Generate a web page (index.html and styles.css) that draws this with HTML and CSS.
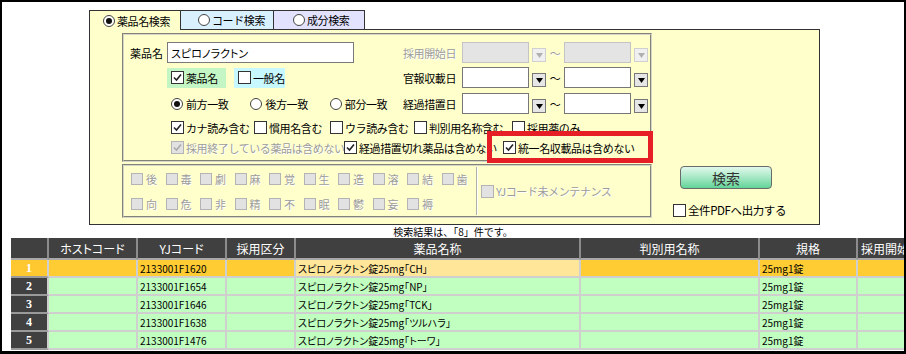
FILE: index.html
```html
<!DOCTYPE html>
<html lang="ja">
<head>
    <meta charset="UTF-8">
    <title>薬品検索</title>
    <link rel="stylesheet" href="styles.css">
</head>
<body>
    <div class="frame">
        <div class="panel">
            <div class="tabs">
                <div class="tab tab-drug"><span class="rd on"></span>薬品名検索</div>
                <div class="tab tab-code"><span class="rd"></span>コード検索</div>
                <div class="tab tab-comp"><span class="rd"></span>成分検索</div>
                <div class="tab-fill"></div>
            </div>
            <div class="panel-body">
                <div class="fields">
                    <div class="box box-main">
                        <div class="row">
                            <div class="lpart">
                                <span class="lbl-name">薬品名</span>
                                <input class="txt" type="text" value="スピロノラクトン">
                            </div>
                            <div class="dates dis">
                                <span class="dlabel">採用開始日</span>
                                <span class="date off"></span><span class="dd off"><svg width="7" height="5"><path d="M0 0h7L3.5 5z"/></svg></span>
                                <span class="tilde">～</span>
                                <span class="date off"></span><span class="dd off"><svg width="7" height="5"><path d="M0 0h7L3.5 5z"/></svg></span>
                            </div>
                        </div>
                        <div class="row row-b">
                            <div class="lpart">
                                <label class="chip chip-green"><span class="cb"><svg width="11" height="11"><path d="M2 5.5L4.5 8L9 2.5"/></svg></span>薬品名</label>
                                <label class="chip chip-cyan"><span class="cb"></span>一般名</label>
                            </div>
                            <div class="dates">
                                <span class="dlabel">官報収載日</span>
                                <span class="date"></span><span class="dd"><svg width="7" height="5"><path d="M0 0h7L3.5 5z"/></svg></span>
                                <span class="tilde">～</span>
                                <span class="date"></span><span class="dd"><svg width="7" height="5"><path d="M0 0h7L3.5 5z"/></svg></span>
                            </div>
                        </div>
                        <div class="row row-c">
                            <div class="lpart radios">
                                <label class="opt"><span class="rd on"></span>前方一致</label>
                                <label class="opt"><span class="rd"></span>後方一致</label>
                                <label class="opt"><span class="rd"></span>部分一致</label>
                            </div>
                            <div class="dates">
                                <span class="dlabel">経過措置日</span>
                                <span class="date"></span><span class="dd"><svg width="7" height="5"><path d="M0 0h7L3.5 5z"/></svg></span>
                                <span class="tilde">～</span>
                                <span class="date"></span><span class="dd"><svg width="7" height="5"><path d="M0 0h7L3.5 5z"/></svg></span>
                            </div>
                        </div>
                        <div class="checks row-d">
                            <label class="chk opt-kana"><span class="cb"><svg width="11" height="11"><path d="M2 5.5L4.5 8L9 2.5"/></svg></span>カナ読み含む</label>
                            <label class="chk opt-common"><span class="cb"></span>慣用名含む</label>
                            <label class="chk opt-ura"><span class="cb"></span>ウラ読み含む</label>
                            <label class="chk opt-ident"><span class="cb"></span>判別用名称含む</label>
                            <label class="chk"><span class="cb"></span>採用薬のみ</label>
                        </div>
                        <div class="checks row-e">
                            <label class="chk dis opt-ended"><span class="cb off"><svg width="11" height="11"><path d="M2 5.5L4.5 8L9 2.5"/></svg></span>採用終了している薬品は含めない</label>
                            <label class="chk opt-expired"><span class="cb"><svg width="11" height="11"><path d="M2 5.5L4.5 8L9 2.5"/></svg></span>経過措置切れ薬品は含めない</label>
                            <label class="chk"><span class="cb"><svg width="11" height="11"><path d="M2 5.5L4.5 8L9 2.5"/></svg></span>統一名収載品は含めない</label>
                        </div>
                    </div>
                    <div class="box box-flags">
                        <div class="flag-grid dis">
                            <label class="flag"><span class="cb off"></span>後</label>
                            <label class="flag"><span class="cb off"></span>毒</label>
                            <label class="flag"><span class="cb off"></span>劇</label>
                            <label class="flag"><span class="cb off"></span>麻</label>
                            <label class="flag"><span class="cb off"></span>覚</label>
                            <label class="flag"><span class="cb off"></span>生</label>
                            <label class="flag"><span class="cb off"></span>造</label>
                            <label class="flag"><span class="cb off"></span>溶</label>
                            <label class="flag"><span class="cb off"></span>結</label>
                            <label class="flag"><span class="cb off"></span>歯</label>
                            <label class="flag"><span class="cb off"></span>向</label>
                            <label class="flag"><span class="cb off"></span>危</label>
                            <label class="flag"><span class="cb off"></span>非</label>
                            <label class="flag"><span class="cb off"></span>精</label>
                            <label class="flag"><span class="cb off"></span>不</label>
                            <label class="flag"><span class="cb off"></span>眠</label>
                            <label class="flag"><span class="cb off"></span>鬱</label>
                            <label class="flag"><span class="cb off"></span>妄</label>
                            <label class="flag"><span class="cb off"></span>褥</label>
                        </div>
                        <div class="vsep"></div>
                        <label class="chk dis yj"><span class="cb off"></span>YJコード未メンテナンス</label>
                    </div>
                </div>
                <div class="actions">
                    <div class="search-btn">検索</div>
                    <label class="chk pdf"><span class="cb"></span>全件PDFへ出力する</label>
                </div>
            </div>
        </div>

        <div class="result-msg">検索結果は、「8」件です。</div>

        <div class="grid-wrap">
            <table class="grid">
                <thead>
                    <tr>
                        <th class="c0"></th>
                        <th class="c1">ホストコード</th>
                        <th class="c2">YJコード</th>
                        <th class="c3">採用区分</th>
                        <th class="c4">薬品名称</th>
                        <th class="c5">判別用名称</th>
                        <th class="c6">規格</th>
                        <th class="c7">採用開始日</th>
                    </tr>
                </thead>
                <tbody>
                    <tr class="sel">
                        <td class="num">1</td><td></td><td>2133001F1620</td><td></td>
                        <td class="focus">スピロノラクトン錠25mg「CH」</td><td></td><td>25mg1錠</td><td></td>
                    </tr>
                    <tr>
                        <td class="num">2</td><td></td><td>2133001F1654</td><td></td>
                        <td>スピロノラクトン錠25mg「NP」</td><td></td><td>25mg1錠</td><td></td>
                    </tr>
                    <tr>
                        <td class="num">3</td><td></td><td>2133001F1646</td><td></td>
                        <td>スピロノラクトン錠25mg「TCK」</td><td></td><td>25mg1錠</td><td></td>
                    </tr>
                    <tr>
                        <td class="num">4</td><td></td><td>2133001F1638</td><td></td>
                        <td>スピロノラクトン錠25mg「ツルハラ」</td><td></td><td>25mg1錠</td><td></td>
                    </tr>
                    <tr>
                        <td class="num">5</td><td></td><td>2133001F1476</td><td></td>
                        <td>スピロノラクトン錠25mg「トーワ」</td><td></td><td>25mg1錠</td><td></td>
                    </tr>
                </tbody>
            </table>
        </div>

        <div class="mark"></div>
    </div>
</body>
</html>
```

FILE: styles.css
```css
/* Drug search screen */
* {
    box-sizing: border-box;
}

body {
    margin: 0;
    font-family: "Noto Sans CJK JP", "Noto Sans", sans-serif;
    font-size: 11px;
    color: #000;
    background: #fff;
}

.frame {
    position: relative;
    width: 906px;
    height: 354px;
    border: 2px solid #000;
    border-bottom-width: 3px;
    display: flex;
    flex-direction: column;
    overflow: hidden;
}

/* search panel */
.panel {
    margin: 8px 0 0 87px;
    width: 731px;
    height: 215px;
    display: flex;
    flex-direction: column;
    flex: none;
}

.tabs {
    display: flex;
    height: 20px;
}

.tab {
    height: 20px;
    border-top: 1px solid #333;
    border-left: 1px solid #333;
    display: flex;
    align-items: center;
    gap: 2px;
    letter-spacing: -0.4px;
}

.tab-drug {
    width: 91px;
    padding-left: 13px;
    background: #ffffcc;
}

.tab-code {
    width: 93px;
    padding-left: 17px;
    background: #d9f1ff;
    border-bottom: 1px solid #333;
}

.tab-comp {
    width: 92px;
    padding-left: 19px;
    background: #e2e2ff;
    border-right: 1px solid #333;
    border-bottom: 1px solid #333;
}

.tab-fill {
    flex: 1;
    border-bottom: 1px solid #333;
}

.panel-body {
    flex: 1;
    display: flex;
    background: #ffffcc;
    border: 1px solid #333;
    border-top: none;
}

.fields {
    margin: 3px 0 0 32px;
    display: flex;
    flex-direction: column;
    gap: 2px;
}

.box {
    width: 530px;
    border: 2px groove #d6d6c6;
}

.box-main {
    height: 129px;
    padding-top: 7px;
}

.row {
    display: flex;
    align-items: center;
    height: 21px;
}

.row-b {
    margin-top: 4px;
}

.row-c {
    margin-top: 5px;
}

.lpart {
    width: 279px;
    display: flex;
    align-items: center;
}

.lbl-name {
    margin-left: 6px;
    width: 37px;
}

.txt {
    width: 187px;
    height: 21px;
    margin: 0;
    padding: 0 3px;
    border: 1px solid #7a7a7a;
    background: #fff;
    font-family: inherit;
    font-size: 11px;
    font-feature-settings: "palt";
    color: #000;
}

/* date range */
.dates {
    display: flex;
    align-items: center;
    height: 21px;
    letter-spacing: -0.4px;
}

.dlabel {
    width: 59px;
}

.date {
    width: 67px;
    height: 21px;
    border: 1px solid #777;
    background: #fff;
}

.date.off {
    border-color: #c4c4c4;
    background: #e4e4e4;
}

.dd {
    width: 14px;
    height: 14px;
    margin-left: 3px;
    align-self: flex-end;
    margin-bottom: 1px;
    border: 1px solid #777;
    background: #e6e6e6;
    display: flex;
    align-items: center;
    justify-content: center;
}

.dd svg {
    fill: #000;
}

.dd.off {
    border-color: #d0d0d0;
    background: #f0f0f0;
}

.dd.off svg {
    fill: #b0b0b0;
}

.tilde {
    width: 18px;
    text-align: center;
}

/* options */
.chip {
    height: 20px;
    display: flex;
    align-items: center;
    gap: 2px;
    padding-left: 4px;
    letter-spacing: -0.4px;
}

.chip-green {
    width: 59px;
    margin-left: 43px;
    background: #c4f5c4;
}

.chip-cyan {
    width: 51px;
    margin-left: 8px;
    background: #c8f8ff;
}

.radios {
    padding-left: 47px;
}

.opt {
    display: flex;
    align-items: center;
    gap: 3px;
    margin-right: 22px;
    letter-spacing: -0.4px;
    white-space: nowrap;
}

.rd {
    width: 12px;
    height: 12px;
    border: 1px solid #444;
    border-radius: 50%;
    background: #fff;
    display: flex;
    align-items: center;
    justify-content: center;
    flex: none;
}

.rd.on::after {
    content: "";
    width: 6px;
    height: 6px;
    border-radius: 50%;
    background: #111;
}

.checks {
    display: flex;
    align-items: center;
    height: 15px;
    padding-left: 47px;
}

.row-d {
    margin-top: 6px;
}

.row-e {
    margin-top: 5px;
}

.opt-kana { width: 83px; }
.opt-common { width: 76px; }
.opt-ura { width: 84px; }
.opt-ident { width: 98px; }
.opt-ended { width: 173px; }
.opt-expired { width: 159px; }

.chk {
    display: inline-flex;
    align-items: center;
    gap: 2px;
    white-space: nowrap;
    letter-spacing: -0.4px;
}

.cb {
    width: 13px;
    height: 13px;
    border: 1px solid #333;
    background: #fff;
    display: inline-flex;
    align-items: center;
    justify-content: center;
    flex: none;
}

.cb svg path {
    fill: none;
    stroke: #222;
    stroke-width: 1.6;
}

.cb.off {
    border-color: #b4b4b4;
    background: #e2e2e2;
}

.cb.off svg path {
    stroke: #aaa;
}

.dis {
    color: #9c9c9c;
    text-shadow: 1px 1px 0 #fff;
}

/* handling flags */
.box-flags {
    height: 54px;
    display: flex;
}

.flag-grid {
    display: grid;
    grid-template-columns: repeat(10, 34.5px);
    row-gap: 13px;
    padding: 7px 0 0 7px;
    align-content: start;
}

.flag {
    display: flex;
    align-items: center;
    gap: 3px;
    height: 12px;
}

.flag .cb {
    width: 12px;
    height: 12px;
}

.vsep {
    width: 2px;
    margin: 1px 0;
    border-left: 1px solid #b0b0a8;
    border-right: 1px solid #fff;
}

.yj {
    align-self: center;
    margin-left: 3px;
}

/* search button */
.actions {
    display: flex;
    flex-direction: column;
    align-items: flex-start;
}

.search-btn {
    width: 92px;
    height: 23px;
    margin: 136px 0 0 28px;
    border: 1px solid #6a6a6a;
    border-radius: 4px;
    background: linear-gradient(#e2f8ec, #9fe6c0 55%, #62d497);
    display: flex;
    align-items: center;
    justify-content: center;
    font-size: 14px;
    color: #333;
}

.pdf {
    margin: 13px 0 0 21px;
    font-size: 11.5px;
}

/* result list */
.result-msg {
    height: 13px;
    line-height: 13px;
    text-align: center;
    font-size: 10px;
    flex: none;
}

.grid-wrap {
    flex: 1;
    min-height: 0;
    margin-left: 9px;
    overflow: hidden;
}

.grid {
    border-collapse: separate;
    border-spacing: 0;
    table-layout: fixed;
    width: 915px;
}

.grid th {
    height: 22px;
    padding: 0;
    background: #404040;
    color: #fff;
    font-weight: normal;
    font-size: 12px;
    font-feature-settings: "palt";
    border-right: 2px solid #8c8c8c;
    border-bottom: 2px solid #a8a8a8;
}

.c0 { width: 38px; }
.c1 { width: 89px; }
.c2 { width: 89px; }
.c3 { width: 69px; }
.c4 { width: 285px; }
.c5 { width: 179px; }
.c6 { width: 98px; }
.c7 { width: 68px; }

.grid td {
    height: 18px;
    padding: 0 0 0 2px;
    background: #c0ffc0;
    border-right: 2px solid #cfcfcf;
    border-bottom: 2px solid #cfcfcf;
    font-size: 10px;
    font-feature-settings: "palt";
    white-space: nowrap;
    overflow: hidden;
}

.grid td.num {
    padding: 0;
    background: #404040;
    color: #fff;
    text-align: center;
    font-family: "Liberation Serif", serif;
    font-size: 12px;
    font-weight: bold;
    border-bottom-color: #9a9a9a;
}

.grid .sel td {
    background: #ffcc33;
}

.grid .sel td.num {
    background: #ffc830;
}

.grid .sel td.focus {
    background: #ffe699;
}

/* highlight frame */
.mark {
    position: absolute;
    left: 485px;
    top: 129px;
    width: 166px;
    height: 32px;
    border: 5px solid #e61e25;
}
```
